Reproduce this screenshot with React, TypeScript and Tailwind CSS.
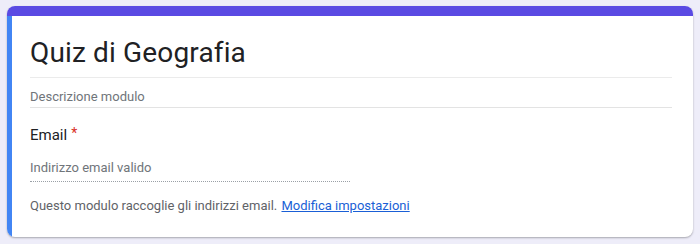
import React from 'react';

function App() {
  return (
    <div className="min-h-[244px] w-[700px] bg-[#eeedf9] pt-[6px] pl-[7px] font-['Roboto',sans-serif]">
      <div className="w-[686px] h-[231px] rounded-[8px] bg-white overflow-hidden shadow-[0_1px_2px_rgba(0,0,0,0.3)] flex flex-col">
        {/* Top accent bar */}
        <div className="h-[10px] bg-[#5a4ae3] shrink-0" />
        <div className="flex flex-1">
          <div className="w-[5px] bg-[#4285f4] shrink-0" />
          <div className="flex-1 pl-[18px] pr-[21px]">
            <div className="pt-[19px] pb-[6px] border-b border-[#ebebeb]">
              <h1 className="text-[28px] tracking-[0.15px] leading-[36px] text-[#202124]">Quiz di Geografia</h1>
            </div>
            <div className="pt-[9px] border-b border-[#e3e3e3]">
              <p className="text-[13px] leading-[20px] text-[#70757a]">Descrizione modulo</p>
            </div>

            <div className="pt-[17px]">
              <div className="text-[15px] leading-[20px] text-[#202124] flex items-start">
                <span>Email</span>
                <span className="ml-[4px] text-[#d93025] text-[14px] leading-[14px] mt-[1px]">*</span>
              </div>
              <div className="w-[320px] mt-[13px] pb-[3px] border-b border-dotted border-[#9aa0a6]">
                <span className="text-[13px] leading-[20px] text-[#70757a] block">Indirizzo email valido</span>
              </div>
              <p className="mt-[14px] text-[13px] leading-[20px] text-[#5f6368]">
                Questo modulo raccoglie gli indirizzi email.{' '}
                <a href="#" className="ml-[1px] text-[#1a5fd6] underline">Modifica impostazioni</a>
              </p>
            </div>
          </div>
        </div>
      </div>
    </div>
  );
}

export default App;
